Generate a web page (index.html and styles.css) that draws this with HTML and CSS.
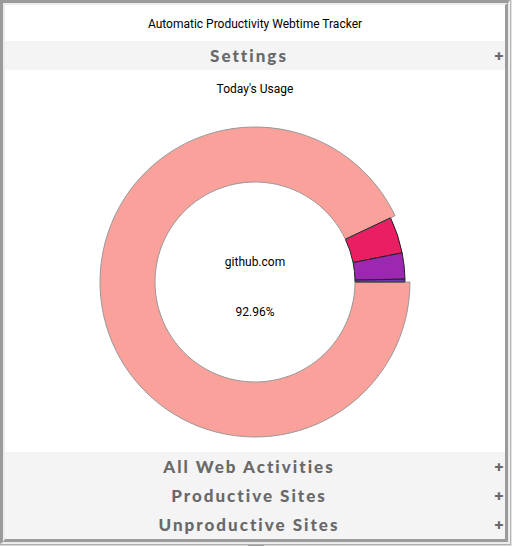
FILE: index.html
```html
<!DOCTYPE html>
<html lang="en">
<head>
<meta charset="utf-8">
<title>Automatic Productivity Webtime Tracker</title>
<link rel="stylesheet" href="styles.css">
</head>
<body>
<div class="window">
  <div class="frame">
    <main class="panel">
      <h1 class="title">Automatic Productivity Webtime Tracker</h1>
      <button class="accordion" type="button"><span class="label">Settings</span><span class="plus">+</span></button>
      <section class="usage">
        <h2 class="subtitle">Today's Usage</h2>
        <svg class="chart" viewBox="-170 -170 340 340" role="img" aria-label="Usage by site">
          <g stroke="#222" stroke-width="1">
            <path fill="#e91e63" d="M135.57-64.2A150 150 0 0 1 147.14-29.14L98.1-19.42A100 100 0 0 0 90.38-42.8Z"/>
            <path fill="#9c27b0" d="M147.14-29.14A150 150 0 0 1 149.97-2.88L99.98-1.92A100 100 0 0 0 98.1-19.42Z"/>
            <path fill="#673ab7" d="M149.97-2.88A150 150 0 0 1 150 0H100A100 100 0 0 0 99.98-1.92Z"/>
          </g>
          <path fill="#f9a19a" stroke="#999" d="M155 0A155 155 0 1 1 140.09-66.34L90.38-42.8A100 100 0 1 0 100 0Z"/>
          <path fill="none" stroke="#222" d="M90.38-42.8L135.57-64.2M100 0H150"/>
          <text class="chart-text" x="0" y="-16">github.com</text>
          <text class="chart-text" x="0" y="34">92.96%</text>
        </svg>
      </section>
      <button class="accordion" type="button"><span class="label">All Web Activities</span><span class="plus">+</span></button>
      <button class="accordion" type="button"><span class="label">Productive Sites</span><span class="plus">+</span></button>
      <button class="accordion" type="button"><span class="label">Unproductive Sites</span><span class="plus">+</span></button>
    </main>
  </div>
</div>
<div class="edge"><span class="grip"></span></div>
</body>
</html>
```

FILE: styles.css
```css
* {
  box-sizing: border-box;
}

body {
  margin: 0;
  background: #e2e2e2;
  color: #000;
  font-family: "Segoe UI", Roboto, sans-serif;
  font-size: 12px;
}

.window {
  margin-right: 1px;
  border-right: 1px solid #b8b8b8;
  border-bottom: 1px solid #b0b0b0;
}

.frame {
  border: solid #ececec;
  border-width: 3px 2px 2px 3px;
  border-top-color: #9b9b9b;
  border-left-color: #9b9b9b;
}

.panel {
  border: solid #9b9b9b;
  border-width: 2px 3px 3px 2px;
  border-top-color: #ececec;
  border-left-color: #ececec;
  background: #fff;
}

.title,
.subtitle {
  margin: 0;
  padding-top: 2px;
  font-size: 12px;
  font-weight: 400;
  line-height: 34px;
  text-align: center;
}

.usage {
  display: flex;
  flex-direction: column;
  gap: 6px;
}

.chart {
  display: block;
  width: 100%;
  height: 340px;
}

.chart-text {
  font-size: 12px;
  text-anchor: middle;
}

.accordion {
  display: flex;
  align-items: center;
  width: 100%;
  height: 29px;
  padding: 0;
  border: 0;
  background: #f4f4f4;
  color: #696969;
  font-family: "Gill Sans MT", Lato, sans-serif;
  font-size: 17px;
  font-weight: 900;
  line-height: 20px;
  letter-spacing: 2px;
  cursor: pointer;
}

.label {
  flex: 1;
  text-align: center;
}

.plus {
  width: 12px;
  font-family: "Open Sans", sans-serif;
  font-size: 16px;
  font-weight: 800;
  letter-spacing: 0;
}

.edge {
  height: 1px;
  background: #d8d8d8;
}

.grip {
  display: block;
  width: 16px;
  height: 1px;
  margin: 0 auto;
  background: #999;
}
```
